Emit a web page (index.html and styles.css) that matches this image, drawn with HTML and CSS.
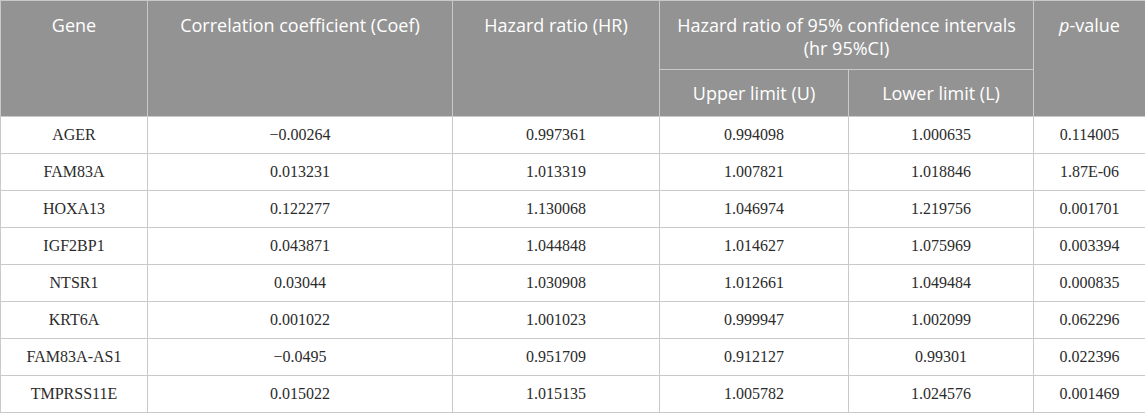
FILE: index.html
```html
<!DOCTYPE html>
<html>
<head>
<meta charset="utf-8">
<link rel="stylesheet" href="styles.css">
</head>
<body>
<table class="data-table">
  <colgroup>
    <col class="c-gene">
    <col class="c-coef">
    <col class="c-hr">
    <col class="c-upper">
    <col class="c-lower">
    <col class="c-p">
  </colgroup>
  <thead>
    <tr class="head-top">
      <th rowspan="2">Gene</th>
      <th rowspan="2">Correlation coefficient (Coef)</th>
      <th rowspan="2">Hazard ratio (HR)</th>
      <th colspan="2">Hazard ratio of 95% confidence intervals<br>(hr 95%CI)</th>
      <th rowspan="2"><i>p</i>-value</th>
    </tr>
    <tr class="head-sub">
      <th>Upper limit (U)</th>
      <th>Lower limit (L)</th>
    </tr>
  </thead>
  <tbody>
    <tr><td>AGER</td><td>−0.00264</td><td>0.997361</td><td>0.994098</td><td>1.000635</td><td>0.114005</td></tr>
    <tr><td>FAM83A</td><td>0.013231</td><td>1.013319</td><td>1.007821</td><td>1.018846</td><td>1.87E-06</td></tr>
    <tr><td>HOXA13</td><td>0.122277</td><td>1.130068</td><td>1.046974</td><td>1.219756</td><td>0.001701</td></tr>
    <tr><td>IGF2BP1</td><td>0.043871</td><td>1.044848</td><td>1.014627</td><td>1.075969</td><td>0.003394</td></tr>
    <tr><td>NTSR1</td><td>0.03044</td><td>1.030908</td><td>1.012661</td><td>1.049484</td><td>0.000835</td></tr>
    <tr><td>KRT6A</td><td>0.001022</td><td>1.001023</td><td>0.999947</td><td>1.002099</td><td>0.062296</td></tr>
    <tr><td>FAM83A-AS1</td><td>−0.0495</td><td>0.951709</td><td>0.912127</td><td>0.99301</td><td>0.022396</td></tr>
    <tr><td>TMPRSS11E</td><td>0.015022</td><td>1.015135</td><td>1.005782</td><td>1.024576</td><td>0.001469</td></tr>
  </tbody>
</table>
</body>
</html>
```

FILE: styles.css
```css
html, body {
  margin: 0;
  padding: 0;
  background: #ffffff;
}

.data-table {
  border-collapse: collapse;
  table-layout: fixed;
  width: 1145px;
}

.c-gene { width: 147px; }
.c-coef { width: 305px; }
.c-hr { width: 207px; }
.c-upper { width: 189px; }
.c-lower { width: 185px; }
.c-p { width: 112px; }

.data-table th {
  background: #939393;
  color: #ffffff;
  font-family: "Open Sans", "Noto Sans", sans-serif;
  font-weight: normal;
  font-size: 18px;
  line-height: 23px;
  border: 1px solid #c9c9c9;
  text-align: center;
  padding: 0 6px;
}

.head-top th {
  vertical-align: top;
  padding-top: 13px;
  height: 55px;
  box-sizing: content-box;
}

.head-sub th {
  vertical-align: middle;
  height: 46px;
  padding-top: 0;
  padding-bottom: 0;
}

.data-table td {
  font-family: "Liberation Serif", "Times New Roman", serif;
  font-size: 16px;
  color: #2b2b2b;
  text-align: center;
  vertical-align: middle;
  border: 1px solid #c9c9c9;
  height: 36px;
  padding: 0 8px;
}
```
